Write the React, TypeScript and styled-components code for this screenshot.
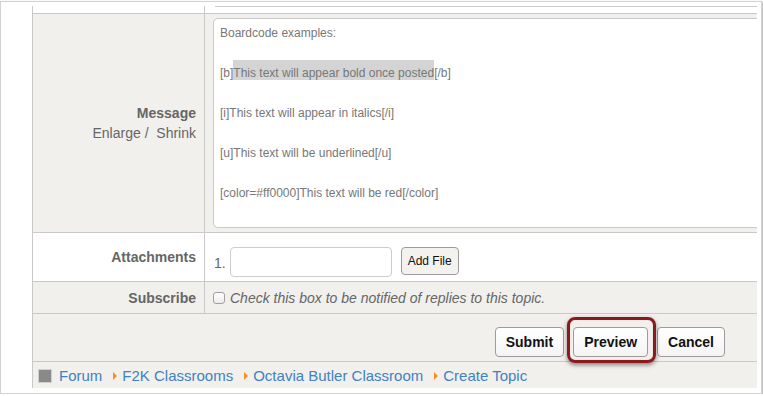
import React from "react";
import styled, { createGlobalStyle } from "styled-components";

const LINE = "#c9c9c9";
const GRAY = "#f1f0ed";
const LABEL = "#666666";

const GlobalStyle = createGlobalStyle`
  html, body { margin: 0; padding: 0; background: #ffffff; }
  body { font-family: "Liberation Sans", Arial, Helvetica, sans-serif; }
  * { box-sizing: border-box; }
`;

const Frame = styled.div`
  margin-top: 1px;
  width: 762px;
  height: 393px;
  border: 1px solid #d2d2d2;
  box-shadow: 1px 1px 2px rgba(0, 0, 0, 0.35);
  background: #ffffff;
  padding: 4px 4px 5px 31px;
`;

const Viewport = styled.div`
  height: 382px;
  overflow: hidden;
  border-left: 1px solid ${LINE};
`;

const Table = styled.div`
  width: 736px;
  display: flex;
  flex-direction: column;
`;

const Row = styled.div<{ $h: number; $bg?: string }>`
  display: grid;
  grid-template-columns: 172px 1fr;
  height: ${(p) => p.$h + 1}px;
  background: ${(p) => p.$bg ?? "#ffffff"};
  border-bottom: 1px solid ${LINE};
`;

const LabelCell = styled.div`
  border-right: 1px solid ${LINE};
  display: flex;
  flex-direction: column;
  justify-content: center;
  align-items: flex-end;
  padding-right: 8px;
  color: ${LABEL};
  font-size: 14px;
  line-height: 20px;
`;

const LabelTitle = styled.div`
  font-weight: bold;
`;

const LabelSub = styled.div`
  white-space: pre;
`;

const ContentCell = styled.div<{ $pad: string }>`
  display: flex;
  align-items: center;
  padding: ${(p) => p.$pad};
  min-width: 0;
  color: ${LABEL};
  font-size: 14px;
`;

const TopRule = styled.div`
  align-self: flex-start;
  flex: 1;
  margin-left: 10px;
  border-top: 1px solid ${LINE};
`;

const TextBox = styled.div`
  width: 100%;
  height: 210px;
  align-self: stretch;
  background: #ffffff;
  border: 1px solid ${LINE};
  border-radius: 5px;
  padding: 1px 6px;
  color: #777777;
  font-size: 12px;
`;

const TextLine = styled.div`
  height: 20px;
  line-height: 26px;
  margin-bottom: 20px;
  white-space: pre;
`;

const Selected = styled.span`
  display: inline-block;
  height: 20px;
  line-height: 26px;
  background: #d4d4d4;
`;

const ItemIndex = styled.div`
  margin-right: 4px;
  margin-top: 2px;
`;

const FileInput = styled.div`
  width: 162px;
  height: 30px;
  border: 1px solid #cccccc;
  border-radius: 4px;
  background: #ffffff;
`;

const Button = styled.button<{ $small?: boolean }>`
  height: ${(p) => (p.$small ? 28 : 30)}px;
  padding: 0 ${(p) => (p.$small ? 6 : 10)}px;
  margin: 0;
  border: 1px solid #9c9c9c;
  border-radius: 4px;
  background: ${(p) => (p.$small ? "#f3f2ef" : "linear-gradient(#ffffff, #f4f4f4)")};
  color: #111111;
  font-family: "Liberation Sans", Arial, Helvetica, sans-serif;
  font-size: ${(p) => (p.$small ? 12 : 14)}px;
  font-weight: ${(p) => (p.$small ? "normal" : "bold")};
  line-height: 1;
`;

const AddFile = styled(Button)`
  margin-left: 9px;
  margin-top: -2px;
`;

const Check = styled.input`
  appearance: none;
  width: 12px;
  height: 12px;
  margin: 1px 5px 0 0;
  border: 1px solid #a0a0a0;
  border-radius: 3px;
  background: linear-gradient(#ffffff, #ececec);
`;

const CheckText = styled.span`
  font-style: italic;
`;

const ButtonsRow = styled.div`
  height: 48px;
  background: ${GRAY};
  border-bottom: 1px solid ${LINE};
  display: flex;
  justify-content: flex-end;
  align-items: flex-start;
  padding: 13px 44px 0 0;
  gap: 9px;
`;

const Highlight = styled.span`
  position: relative;
  display: inline-flex;
  &::after {
    content: "";
    position: absolute;
    top: -10px;
    left: -6px;
    right: -8px;
    bottom: -6px;
    border: 3px solid #8c1a1d;
    border-radius: 8px;
    box-shadow: 0 2px 4px rgba(0, 0, 0, 0.45), inset 0 0 1px rgba(0, 0, 0, 0.3);
    pointer-events: none;
  }
`;

const Crumbs = styled.div`
  height: 26px;
  background: ${GRAY};
  display: flex;
  align-items: center;
  padding: 1px 0 0 5px;
  font-size: 15px;
`;

const HomeIcon = styled.span`
  width: 14px;
  height: 14px;
  background: #8a8a8a;
  border: 1px solid #cfcfcf;
  margin-right: 7px;
`;

const Arrow = styled.span`
  width: 0;
  height: 0;
  border-left: 4px solid #f4901e;
  border-top: 4px solid transparent;
  border-bottom: 4px solid transparent;
  margin: 1px 5px 0 11px;
`;

const Crumb = styled.a`
  color: #4281c2;
  text-decoration: none;
`;

export default function App() {
  const crumbs = ["F2K Classrooms", "Octavia Butler Classroom", "Create Topic"];
  return (
    <>
      <GlobalStyle />
      <Frame>
        <Viewport>
          <Table>
            <Row $h={7}>
              <LabelCell />
              <ContentCell $pad="0">
                <TopRule />
              </ContentCell>
            </Row>
            <Row $h={218} $bg={GRAY}>
              <LabelCell>
                <LabelTitle>Message</LabelTitle>
                <LabelSub>{"Enlarge /  Shrink"}</LabelSub>
              </LabelCell>
              <ContentCell $pad="4px 0 4px 8px">
                <TextBox>
                  <TextLine>Boardcode examples:</TextLine>
                  <TextLine>
                    [b]<Selected>This text will appear bold once posted</Selected>[/b]
                  </TextLine>
                  <TextLine>[i]This text will appear in italics[/i]</TextLine>
                  <TextLine>[u]This text will be underlined[/u]</TextLine>
                  <TextLine>[color=#ff0000]This text will be red[/color]</TextLine>
                </TextBox>
              </ContentCell>
            </Row>
            <Row $h={48}>
              <LabelCell>
                <LabelTitle>Attachments</LabelTitle>
              </LabelCell>
              <ContentCell $pad="14px 0 4px 9px">
                <ItemIndex>1.</ItemIndex>
                <FileInput />
                <AddFile $small>Add File</AddFile>
              </ContentCell>
            </Row>
            <Row $h={31} $bg={GRAY}>
              <LabelCell>
                <LabelTitle>Subscribe</LabelTitle>
              </LabelCell>
              <ContentCell $pad="0 0 0 8px">
                <Check type="checkbox" />
                <CheckText>Check this box to be notified of replies to this topic.</CheckText>
              </ContentCell>
            </Row>
            <ButtonsRow>
              <Button>Submit</Button>
              <Highlight>
                <Button>Preview</Button>
              </Highlight>
              <Button>Cancel</Button>
            </ButtonsRow>
            <Crumbs>
              <HomeIcon />
              <Crumb href="#">Forum</Crumb>
              {crumbs.map((c) => (
                <React.Fragment key={c}>
                  <Arrow />
                  <Crumb href="#">{c}</Crumb>
                </React.Fragment>
              ))}
            </Crumbs>
          </Table>
        </Viewport>
      </Frame>
    </>
  );
}
